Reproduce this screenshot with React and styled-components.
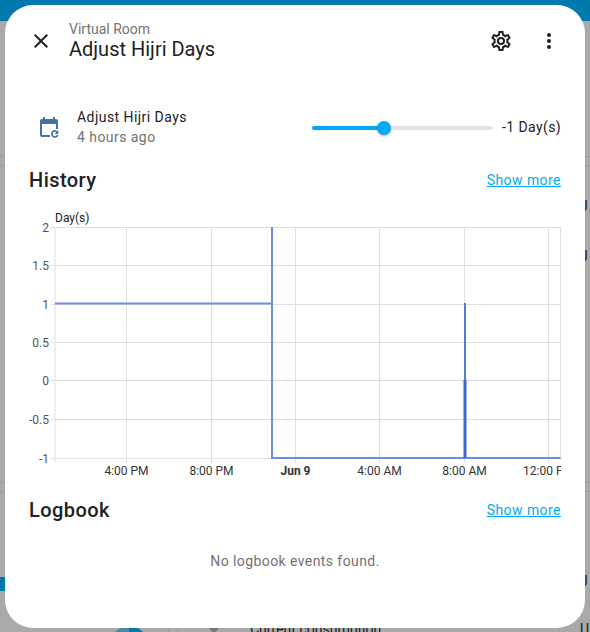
import React from "react";
import styled, { createGlobalStyle } from "styled-components";

const Global = createGlobalStyle`
  html, body { margin: 0; padding: 0; width: 590px; height: 632px; overflow: hidden; background: #a9a9a9; }
  body { font-family: Roboto, "Liberation Sans", sans-serif; }
`;

const Backdrop = styled.div`
  position: relative;
  width: 590px;
  height: 632px;
  background: #a9a9a9;
  overflow: hidden;
  display: flex;
  flex-direction: column;
`;
const AppBar = styled.div`
  height: 21px;
  flex: none;
  background: #0079ad;
`;
const BackRule = styled.div`
  height: 10px;
  flex: none;
  margin-top: ${(p) => p.$top}px;
  border-top: 1px solid #9c9c9c;
  border-bottom: 1px solid #9c9c9c;
  box-sizing: border-box;
`;
const BackBlue = styled.div`
  width: 6px;
  height: 14px;
  flex: none;
  margin-top: 85px;
  background: #0079ad;
  border-radius: 0 2px 2px 0;
`;
const BackLetter = styled.span`
  position: absolute;
  left: 580px;
  top: ${(p) => p.$top}px;
  font-size: 14px;
  line-height: 16px;
  color: #1a1a1a;
`;
const BackCircle = styled.div`
  position: absolute;
  left: 110px;
  top: 626px;
  width: 38px;
  height: 38px;
  border-radius: 50%;
  background: conic-gradient(#0079ad 0 50%, #4a88a8 50% 100%);
`;
const BackTick = styled.div`
  position: absolute;
  left: ${(p) => p.$left}px;
  top: 628px;
  width: 1px;
  height: 4px;
  background: #9c9c9c;
`;
const BackCaption = styled.span`
  position: absolute;
  left: 250px;
  top: 621px;
  font-size: 14px;
  line-height: 16px;
  color: #1a1a1a;
  white-space: nowrap;
`;
const BackTriangle = styled.div`
  position: absolute;
  left: 209px;
  top: 628px;
  width: 0;
  height: 0;
  border-left: 5px solid transparent;
  border-right: 5px solid transparent;
  border-top: 6px solid #777;
`;

const Dialog = styled.div`
  position: fixed;
  left: 5px;
  top: 5px;
  width: 580px;
  height: 623px;
  box-sizing: border-box;
  background: #fff;
  border-radius: 28px;
  overflow: hidden;
  color: #212121;
`;
const Header = styled.header`
  display: flex;
  align-items: center;
  height: 48px;
  padding: 12px 12px 0;
`;
const IconButton = styled.button`
  width: 48px;
  height: 48px;
  flex: none;
  border: 0;
  padding: 0;
  background: none;
  color: #212121;
  display: flex;
  align-items: center;
  justify-content: center;
`;
const Titles = styled.div`
  flex: 1;
  margin-left: 4px;
  display: flex;
  flex-direction: column;
`;
const Eyebrow = styled.div`
  font-size: 14px;
  line-height: 16px;
  color: #727272;
`;
const Title = styled.h1`
  margin: 0;
  font-size: 20px;
  font-weight: 400;
  line-height: 24px;
`;
const Content = styled.div`
  padding: 0 24px;
`;
const EntityRow = styled.div`
  display: flex;
  align-items: center;
  height: 40px;
  margin-top: 42px;
`;
const EntityIcon = styled.div`
  width: 24px;
  height: 24px;
  margin: 2px 0 0 8px;
  flex: none;
  color: #44739e;
`;
const EntityText = styled.div`
  margin-left: 16px;
  width: 235px;
  flex: none;
`;
const EntityName = styled.div`
  font-size: 14px;
  line-height: 20px;
  letter-spacing: 0.45px;
`;
const EntityTime = styled.div`
  font-size: 14px;
  line-height: 20px;
  letter-spacing: 0.45px;
  color: #727272;
`;
const Slider = styled.div`
  position: relative;
  width: 180px;
  height: 4px;
  margin-top: 2px;
  flex: none;
  border-radius: 2px;
  background: #e4e1e6;
`;
const SliderFill = styled.div`
  height: 100%;
  border-radius: 2px;
  background: #03a9f4;
`;
const SliderThumb = styled.div`
  position: absolute;
  top: -5px;
  width: 14px;
  height: 14px;
  margin-left: -7px;
  border-radius: 50%;
  background: #03a9f4;
  box-shadow: 0 1px 2px rgba(0, 0, 0, 0.3);
`;
const Value = styled.div`
  margin-left: 10px;
  font-size: 14px;
  letter-spacing: 0.4px;
  white-space: nowrap;
`;
const SectionHead = styled.div`
  display: flex;
  align-items: center;
  justify-content: space-between;
  margin-top: ${(p) => p.$top}px;
  height: 28px;
`;
const SectionTitle = styled.h2`
  margin: 0;
  font-size: 20px;
  font-weight: 500;
  letter-spacing: 0.45px;
  color: #212121;
`;
const ShowMore = styled.a`
  font-size: 14px;
  letter-spacing: 0.45px;
  color: #03a9f4;
  text-decoration: underline;
`;
const Chart = styled.svg`
  display: block;
  width: 532px;
  height: 280px;
  margin-top: 5px;
`;
const Empty = styled.div`
  margin-top: 27px;
  text-align: center;
  font-size: 14px;
  line-height: 20px;
  letter-spacing: 0.42px;
  color: #727272;
`;

const Mdi = ({ d }) => (
  <svg width="24" height="24" viewBox="0 0 24 24" fill="currentColor">
    <path d={d} />
  </svg>
);

const CLOSE = "M19,6.41L17.59,5L12,10.59L6.41,5L5,6.41L10.59,12L5,17.59L6.41,19L12,13.41L17.59,19L19,17.59L13.41,12L19,6.41Z";
const DOTS = "M12,16A2,2 0 0,1 14,18A2,2 0 0,1 12,20A2,2 0 0,1 10,18A2,2 0 0,1 12,16M12,10A2,2 0 0,1 14,12A2,2 0 0,1 12,14A2,2 0 0,1 10,12A2,2 0 0,1 12,10M12,4A2,2 0 0,1 14,6A2,2 0 0,1 12,8A2,2 0 0,1 10,6A2,2 0 0,1 12,4Z";
const COG = "M12,8A4,4 0 0,1 16,12A4,4 0 0,1 12,16A4,4 0 0,1 8,12A4,4 0 0,1 12,8M12,10A2,2 0 0,0 10,12A2,2 0 0,0 12,14A2,2 0 0,0 14,12A2,2 0 0,0 12,10M10,22C9.75,22 9.54,21.82 9.5,21.58L9.13,18.93C8.5,18.68 7.96,18.34 7.44,17.94L4.95,18.95C4.73,19.03 4.46,18.95 4.34,18.73L2.34,15.27C2.21,15.05 2.27,14.78 2.46,14.63L4.57,12.97L4.5,12L4.57,11L2.46,9.37C2.27,9.22 2.21,8.95 2.34,8.73L4.34,5.27C4.46,5.05 4.73,4.96 4.95,5.05L7.44,6.05C7.96,5.66 8.5,5.32 9.13,5.07L9.5,2.42C9.54,2.18 9.75,2 10,2H14C14.25,2 14.46,2.18 14.5,2.42L14.87,5.07C15.5,5.32 16.04,5.66 16.56,6.05L19.05,5.05C19.27,4.96 19.54,5.05 19.66,5.27L21.66,8.73C21.79,8.95 21.73,9.22 21.54,9.37L19.43,11L19.5,12L19.43,13L21.54,14.63C21.73,14.78 21.79,15.05 21.66,15.27L19.66,18.73C19.54,18.95 19.27,19.04 19.05,18.95L16.56,17.95C16.04,18.34 15.5,18.68 14.87,18.93L14.5,21.58C14.46,21.82 14.25,22 14,22H10M11.25,4L10.88,6.61C9.68,6.86 8.62,7.5 7.85,8.39L5.44,7.35L4.69,8.65L6.8,10.2C6.4,11.37 6.4,12.64 6.8,13.8L4.68,15.36L5.43,16.66L7.86,15.62C8.63,16.5 9.68,17.14 10.87,17.38L11.24,20H12.76L13.13,17.39C14.32,17.14 15.37,16.5 16.14,15.62L18.57,16.66L19.32,15.36L17.2,13.81C17.6,12.64 17.6,11.37 17.2,10.2L19.31,8.65L18.56,7.35L16.15,8.39C15.38,7.5 14.32,6.86 13.12,6.62L12.75,4H11.25Z";

const CalendarSync = () => (
  <svg width="24" height="24" viewBox="0 0 24 24" fill="currentColor">
    <path d="M19 3H18V1H16V3H8V1H6V3H5C3.9 3 3 3.9 3 5V19C3 20.1 3.9 21 5 21H13V19H5V8H19V13H21V5C21 3.9 20.1 3 19 3Z" />
    <path
      d="M20.3 16.2A3 3 0 1 0 20.7 19"
      fill="none"
      stroke="currentColor"
      strokeWidth="1.7"
    />
    <path d="M21.3 14.2V18H17.6Z" />
  </svg>
);

// Chart coordinates: svg origin is page (29, 199)
const X0 = 26;
const X1 = 531.5;
const ys = [28, 66, 105, 143, 181, 220, 259];
const yLabels = ["2", "1.5", "1", "0.5", "0", "-0.5", "-1"];
const xs = [
  { x: 97.5, label: "4:00 PM" },
  { x: 182.5, label: "8:00 PM" },
  { x: 266.5, label: "Jun 9", bold: true },
  { x: 350.5, label: "4:00 AM" },
  { x: 435.5, label: "8:00 AM" },
  { x: 519.5, label: "12:00 PM" },
];

const HistoryChart = () => (
  <Chart viewBox="0 0 532 280" fontFamily="Roboto, 'Liberation Sans', sans-serif" fontSize="12">
    <defs>
      <clipPath id="plot">
        <rect x="0" y="0" width="532" height="280" />
      </clipPath>
    </defs>
    <text x="26" y="23" fill="#212121" fontSize="12">Day(s)</text>
    <g stroke="#e0e0e0" strokeWidth="1">
      {ys.map((y) => (
        <line key={y} x1={21} x2={X1} y1={y + 0.5} y2={y + 0.5} />
      ))}
      <line x1={X0} x2={X0} y1={28} y2={264} />
      <line x1={X1} x2={X1} y1={28} y2={259} />
      {xs.map((t) => (
        <line key={t.x} x1={t.x} x2={t.x} y1={28} y2={264} />
      ))}
    </g>
    {ys.map((y, i) => (
      <text key={y} x={20} y={y + 4.5} textAnchor="end" fill="#555" fontSize="12">
        {yLabels[i]}
      </text>
    ))}
    <g clipPath="url(#plot)">
      {xs.map((t) => (
        <text
          key={t.label}
          x={t.x}
          y={276}
          textAnchor="middle"
          fill="#333"
          fontSize="12"
          fontWeight={t.bold ? 700 : 400}
        >
          {t.label}
        </text>
      ))}
    </g>
    <path
      d="M26 104.5H243V28M243 104.5V259H531.5"
      fill="none"
      stroke="#6d8edd"
      strokeWidth="2"
    />
    <path d="M436 104V259" fill="none" stroke="#6d8edd" strokeWidth="2" />
    <path d="M436 104V181" fill="none" stroke="#3f67d6" strokeWidth="1" />
    <path d="M436 181V259" fill="none" stroke="#3f67d6" strokeWidth="3" />
  </Chart>
);

export default function App() {
  return (
    <>
      <Global />
      <Backdrop>
        <AppBar />
        <BackRule $top={135} />
        <BackRule $top={316} />
        <BackBlue />
        <BackLetter $top={198}>J</BackLetter>
        <BackLetter $top={248}>J</BackLetter>
        <BackLetter $top={573}>J</BackLetter>
        <BackLetter $top={621}>U</BackLetter>
        <BackCircle />
        <BackTick $left={168} />
        <BackTick $left={177} />
        <BackTriangle />
        <BackCaption>Current consumption</BackCaption>
      </Backdrop>
      <Dialog>
        <Header>
          <IconButton><Mdi d={CLOSE} /></IconButton>
          <Titles>
            <Eyebrow>Virtual Room</Eyebrow>
            <Title>Adjust Hijri Days</Title>
          </Titles>
          <IconButton><Mdi d={COG} /></IconButton>
          <IconButton><Mdi d={DOTS} /></IconButton>
        </Header>
        <Content>
          <EntityRow>
            <EntityIcon><CalendarSync /></EntityIcon>
            <EntityText>
              <EntityName>Adjust Hijri Days</EntityName>
              <EntityTime>4 hours ago</EntityTime>
            </EntityText>
            <Slider>
              <SliderFill style={{ width: "40%" }} />
              <SliderThumb style={{ left: "40%" }} />
            </Slider>
            <Value>-1 Day(s)</Value>
          </EntityRow>
          <SectionHead $top={19}>
            <SectionTitle>History</SectionTitle>
            <ShowMore>Show more</ShowMore>
          </SectionHead>
          <HistoryChart />
          <SectionHead $top={17}>
            <SectionTitle>Logbook</SectionTitle>
            <ShowMore>Show more</ShowMore>
          </SectionHead>
          <Empty>No logbook events found.</Empty>
        </Content>
      </Dialog>
    </>
  );
}
